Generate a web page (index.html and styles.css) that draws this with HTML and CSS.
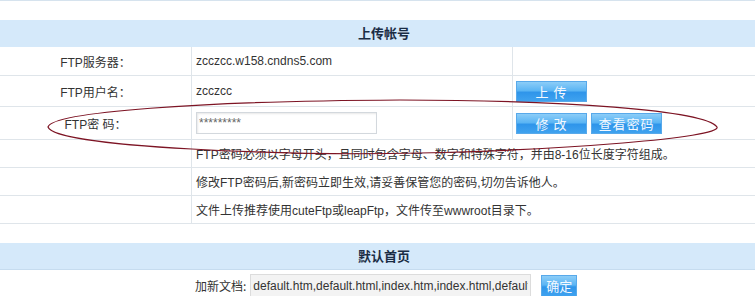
FILE: index.html
```html
<!DOCTYPE html>
<html lang="zh-CN">

<head>
    <meta charset="UTF-8">
    <title>FTP设置</title>
    <link rel="stylesheet" href="styles.css">
</head>

<body>
    <div class="page">
        <div class="top-line"></div>

        <div class="panel">
            <div class="panel-title">上传帐号</div>
            <div class="row row-1">
                <div class="label">FTP服务器：</div>
                <div class="value">zcczcc.w158.cndns5.com</div>
                <div class="action"></div>
            </div>
            <div class="row row-2">
                <div class="label">FTP用户名：</div>
                <div class="value">zcczcc</div>
                <div class="action"><button class="btn">上 传</button></div>
            </div>
            <div class="row row-3">
                <div class="label">FTP密 码：</div>
                <div class="value"><input class="pwd" type="text" value="*********"></div>
                <div class="action">
                    <button class="btn">修 改</button>
                    <button class="btn">查看密码</button>
                </div>
            </div>
            <div class="row">
                <div class="label"></div>
                <div class="value wide">FTP密码必须以字母开头，且同时包含字母、数字和特殊字符，并由8-16位长度字符组成。</div>
            </div>
            <div class="row">
                <div class="label"></div>
                <div class="value wide">修改FTP密码后,新密码立即生效,请妥善保管您的密码,切勿告诉他人。</div>
            </div>
            <div class="row">
                <div class="label"></div>
                <div class="value wide">文件上传推荐使用cuteFtp或leapFtp，文件传至wwwroot目录下。</div>
            </div>
        </div>

        <div class="panel panel-home">
            <div class="panel-title">默认首页</div>
            <div class="home-row">
                <span class="home-label">加新文档:</span>
                <input class="docs" type="text" value="default.htm,default.html,index.htm,index.html,default.asp,index.asp">
                <button class="btn btn-small">确定</button>
            </div>
        </div>

        <!-- hand drawn mark around the password row -->
        <svg class="mark" width="755" height="296" viewBox="0 0 755 296">
            <path d="M48,127 C52,112 200,101 400,100 C560,100 705,110 717,127 C722,138 560,150 420,153 C300,156 55,148 48,127 Z"
                fill="none" stroke="#7d1424" stroke-width="1.2" />
        </svg>
    </div>
</body>

</html>
```

FILE: styles.css
```css
html,
body {
    margin: 0;
    padding: 0;
    overflow: hidden;
    background-color: #fff;
}

body {
    font-family: "Liberation Sans", "Noto Sans CJK SC", sans-serif;
    font-size: 12px;
    color: #333;
}

.page {
    position: relative;
    width: 768px;
}

.top-line {
    height: 1px;
    background-color: #d6e3ee;
}

.panel {
    margin-top: 19px;
}

.panel-title {
    height: 27px;
    line-height: 27px;
    background-color: #d5e9fa;
    text-align: center;
    font-size: 13px;
    font-weight: bold;
    color: #1a2c44;
}

.row {
    display: flex;
    box-sizing: border-box;
    height: 28px;
    border-bottom: 1px solid #dfe5ea;
}

.row-1 {
    height: 29px;
}

.row-2 {
    height: 31px;
}

.row-3 {
    height: 33px;
}

.label {
    width: 191px;
    display: flex;
    align-items: center;
    justify-content: center;
}

.value {
    width: 321px;
    box-sizing: border-box;
    border-left: 1px solid #dfe5ea;
    padding-left: 4px;
    display: flex;
    align-items: center;
}

.value.wide {
    flex: 1;
}

.action {
    flex: 1;
    border-left: 1px solid #dfe5ea;
    padding-left: 3px;
    display: flex;
    align-items: center;
    gap: 4px;
}

.btn {
    width: 71px;
    height: 21px;
    padding: 0;
    border: 1px solid #58a9ea;
    background: linear-gradient(#8ccdf8, #5bb5f4 45%, #2f95ea 55%, #3fa2ef);
    color: #f4f9ff;
    font-family: "Noto Sans CJK SC", sans-serif;
    font-size: 13px;
    line-height: 19px;
    letter-spacing: 1px;
    cursor: pointer;
}

.pwd {
    width: 181px;
    height: 22px;
    box-sizing: border-box;
    margin: 0;
    padding: 0 2px;
    border: 1px solid #d3d8dd;
    box-shadow: inset 1px 1px 2px #e8e8e8;
    font-family: "Liberation Sans", sans-serif;
    font-size: 12px;
    color: #666;
}

.panel-home .panel-title {
    height: 26px;
    border-bottom: 1px solid #c6dcef;
}

.home-row {
    display: flex;
    align-items: center;
    padding: 4px 0 0 195px;
}

.home-label {
    font-family: "Noto Sans CJK SC", sans-serif;
}

.docs {
    width: 281px;
    height: 23px;
    box-sizing: border-box;
    margin: 0 0 0 4px;
    padding: 0 2px;
    border: 1px solid #dcdcdc;
    background-color: #f3f3f3;
    font-family: "Liberation Sans", sans-serif;
    font-size: 12px;
    color: #333;
}

.btn-small {
    width: 36px;
    height: 22px;
    margin-left: 10px;
    letter-spacing: 0;
    font-size: 13px;
}

.mark {
    position: absolute;
    left: 0;
    top: 0;
    pointer-events: none;
}
```
